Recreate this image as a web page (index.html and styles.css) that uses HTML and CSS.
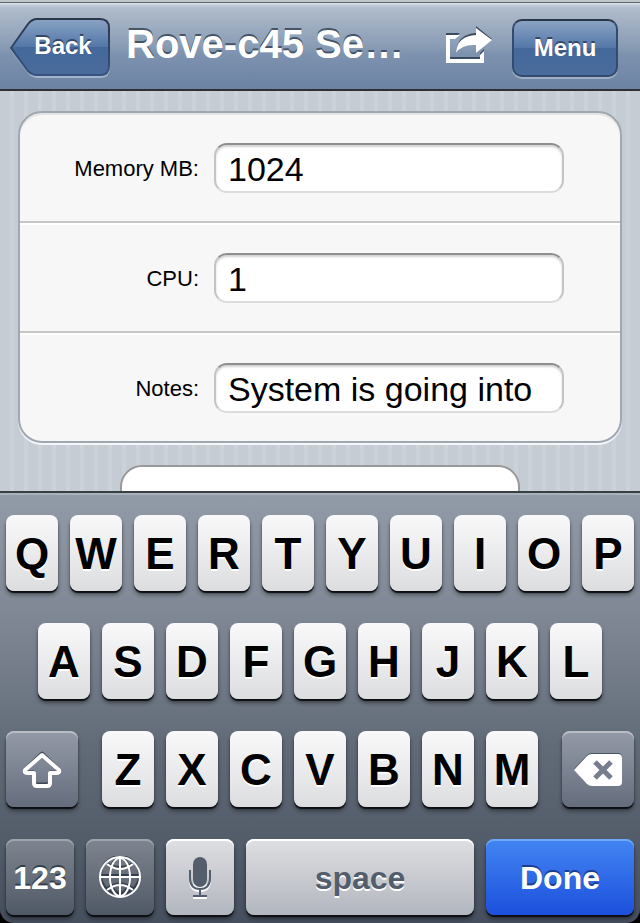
FILE: index.html
```
<!DOCTYPE html>
<html lang="en">
<head>
    <meta charset="UTF-8">
    <meta name="viewport" content="width=device-width, initial-scale=1.0">
    <title>Rove-c45 Settings</title>
    <link rel="stylesheet" href="styles.css">
</head>
<body>
    <header class="toolbar">
        <button class="back-btn" type="button">
            <svg class="back-shape" viewBox="0 0 100 60" aria-hidden="true">
                <defs>
                    <linearGradient id="backFill" x1="0" y1="0" x2="0" y2="1">
                        <stop offset="0" stop-color="#8aa3c4"/>
                        <stop offset="0.5" stop-color="#5377a8"/>
                        <stop offset="0.5" stop-color="#436899"/>
                        <stop offset="1" stop-color="#4a6c9d"/>
                    </linearGradient>
                    <linearGradient id="backEdge" x1="0" y1="0" x2="0" y2="1">
                        <stop offset="0" stop-color="#2b3749"/>
                        <stop offset="1" stop-color="#375381"/>
                    </linearGradient>
                </defs>
                <path d="M1 31 L18 7 Q22 3 27 3 H90 Q99 3 99 12 V50 Q99 59 90 59 H27 Q22 59 18 54 Z" fill="none" stroke="#a3b3c9" stroke-width="2"/>
                <path d="M1 30 L18 6 Q22 1 27 1 H90 Q99 1 99 10 V48 Q99 57 90 57 H27 Q22 57 18 53 Z" fill="url(#backFill)" stroke="url(#backEdge)" stroke-width="2"/>
            </svg>
            <span class="back-label">Back</span>
        </button>
        <h1 class="title">Rove-c45 Se…</h1>
        <button class="share-btn" type="button" aria-label="Share">
            <svg viewBox="0 0 48 40" aria-hidden="true">
                <g fill="#3c4a60">
                    <path d="M1 7 H15 L10 11 H5 V31 H35 V27 L39 23 V35 H1 Z"/>
                    <path d="M31 0 L47 13 L31 27 V19 Q17 17 11 27 Q12 8 31 7 Z"/>
                </g>
                <g fill="#fff">
                    <path d="M1 9 H15 L10 13 H5 V33 H35 V29 L39 25 V37 H1 Z"/>
                    <path d="M31 2 L47 14 L31 27 V19 Q17 18 11 27 Q12 10 31 9 Z"/>
                </g>
            </svg>
        </button>
        <button class="menu-btn" type="button">Menu</button>
    </header>

    <main class="content">
        <form class="card">
            <div class="field">
                <label for="memory">Memory MB:</label>
                <input type="text" id="memory" value="1024">
            </div>
            <div class="field">
                <label for="cpu">CPU:</label>
                <input type="text" id="cpu" value="1">
            </div>
            <div class="field">
                <label for="notes">Notes:</label>
                <input type="text" id="notes" value="System is going into">
            </div>
        </form>
        <div class="panel"></div>
    </main>

    <footer class="keyboard-wrap">
        <div class="keyboard">
            <div class="row">
                <button class="key" type="button">Q</button>
                <button class="key" type="button">W</button>
                <button class="key" type="button">E</button>
                <button class="key" type="button">R</button>
                <button class="key" type="button">T</button>
                <button class="key" type="button">Y</button>
                <button class="key" type="button">U</button>
                <button class="key" type="button">I</button>
                <button class="key" type="button">O</button>
                <button class="key" type="button">P</button>
            </div>
            <div class="row row-inset">
                <button class="key" type="button">A</button>
                <button class="key" type="button">S</button>
                <button class="key" type="button">D</button>
                <button class="key" type="button">F</button>
                <button class="key" type="button">G</button>
                <button class="key" type="button">H</button>
                <button class="key" type="button">J</button>
                <button class="key" type="button">K</button>
                <button class="key" type="button">L</button>
            </div>
            <div class="row">
                <button class="key key-mid key-shift" type="button" aria-label="Shift">
                    <svg class="icon-shift" viewBox="0 0 42 38" aria-hidden="true">
                        <path d="M21 2 L38 18 Q39 21 35 21 H29 V30 Q29 33 26 33 H16 Q13 33 13 30 V21 H7 Q3 21 4 18 Z" fill="none" stroke="#3d4654" stroke-width="3" stroke-linejoin="round"/>
                        <path d="M21 4 L38 19 Q39 22 35 22 H29 V32 Q29 35 26 35 H16 Q13 35 13 32 V22 H7 Q3 22 4 19 Z" fill="none" stroke="#fff" stroke-width="4" stroke-linejoin="round"/>
                    </svg>
                </button>
                <button class="key" type="button">Z</button>
                <button class="key" type="button">X</button>
                <button class="key" type="button">C</button>
                <button class="key" type="button">V</button>
                <button class="key" type="button">B</button>
                <button class="key" type="button">N</button>
                <button class="key" type="button">M</button>
                <button class="key key-mid key-delete" type="button" aria-label="Delete">
                    <svg class="icon-delete" viewBox="0 0 50 36" aria-hidden="true">
                        <path d="M1 17 L14 3 Q16 1 19 1 H45 Q49 1 49 5 V29 Q49 33 45 33 H19 Q16 33 14 31 Z" fill="#4a5363"/>
                        <path d="M1 18 L14 4 Q16 2 19 2 H45 Q49 2 49 6 V30 Q49 34 45 34 H19 Q16 34 14 32 Z" fill="#fff"/>
                        <path d="M22 10 L38 26 M38 10 L22 26" stroke="#767e8d" stroke-width="5"/>
                    </svg>
                </button>
            </div>
            <div class="row">
                <button class="key key-dark key-num" type="button">123</button>
                <button class="key key-dark key-num" type="button" aria-label="Next keyboard">
                    <svg class="icon-globe" viewBox="0 0 44 44" aria-hidden="true">
                        <g fill="none" stroke="#353e4b" stroke-width="2">
                            <circle cx="22" cy="19" r="19"/>
                            <path d="M3 19 H41 M9 7 Q22 15 35 7 M9 32 Q22 23 35 32"/>
                            <ellipse cx="22" cy="19" rx="10" ry="18"/>
                        </g>
                        <g fill="none" stroke="#fff" stroke-width="2">
                            <circle cx="22" cy="21" r="20"/>
                            <path d="M2 21 H42 M22 2 V41 M9 8 Q22 18 35 8 M9 34 Q22 24 35 34"/>
                            <ellipse cx="22" cy="21" rx="10" ry="19"/>
                        </g>
                    </svg>
                </button>
                <button class="key key-light key-num" type="button" aria-label="Dictation">
                    <svg class="icon-mic" viewBox="0 0 24 46" aria-hidden="true">
                        <g fill="none" stroke="#fff" stroke-width="2">
                            <path d="M2 17 V25 Q2 36 12 36 Q22 36 22 25 V17 M12 36 V43 M5 43 H19"/>
                        </g>
                        <rect x="5" y="4" width="14" height="30" rx="7" fill="#fff"/>
                        <rect x="5" y="2" width="14" height="30" rx="7" fill="#535d6b"/>
                        <path d="M2 15 V23 Q2 34 12 34 Q22 34 22 23 V15 M12 34 V41 M5 41 H19" fill="none" stroke="#535d6b" stroke-width="2"/>
                    </svg>
                </button>
                <button class="key key-light key-space" type="button">space</button>
                <button class="key key-blue key-done" type="button">Done</button>
            </div>
        </div>
    </footer>
</body>
</html>
```

FILE: styles.css
```
* {
    box-sizing: border-box;
}
body {
    margin: 0;
    height: 100vh;
    display: flex;
    flex-direction: column;
    overflow: hidden;
    font-family: "Liberation Sans", Arial, Helvetica, sans-serif;
    color: #000;
    background: #000;
}
button {
    margin: 0;
    padding: 0;
    border: none;
    background: none;
    font-family: inherit;
    cursor: pointer;
}
svg {
    display: block;
}

/* toolbar */
.toolbar {
    flex: none;
    display: flex;
    align-items: center;
    height: 91px;
    padding: 4px 22px 0 10px;
    border-top: 2px solid #c2c7c8;
    border-bottom: 2px solid #2d3034;
    background: linear-gradient(#5c656e 0, #5c656e 1px, #e3e9ee 1px, #c3ced9 3px, #b0bccb 6px, #8a9db5 50%, #7d92af 60%, #6d83a3);
}
.back-btn {
    position: relative;
    width: 100px;
    height: 60px;
    padding-bottom: 4px;
}
.back-shape {
    position: absolute;
    top: 0;
    left: 0;
    width: 100%;
    height: 60px;
}
.back-label {
    position: relative;
    padding-left: 6px;
    font-size: 24px;
    font-weight: bold;
    line-height: 28px;
    color: #fff;
    text-shadow: 0 -2px 0 #34496a;
}
.title {
    flex: 1;
    min-width: 0;
    margin: 0;
    padding: 0 0 8px 16px;
    overflow: hidden;
    white-space: nowrap;
    font-size: 40px;
    line-height: 52px;
    color: #fff;
    text-shadow: 0 -2px 0 #465468;
}
.share-btn {
    height: 44px;
    width: 48px;
    padding-bottom: 4px;
    margin-right: 19px;
}
.menu-btn {
    width: 106px;
    height: 58px;
    border: 2px solid #344b70;
    border-top-color: #2b3749;
    border-radius: 10px;
    background: linear-gradient(#8aa3c4, #5377a8 50%, #436899 50%, #4a6c9d);
    box-shadow: 0 2px 0 #a0afc5;
    font-size: 24px;
    font-weight: bold;
    color: #fff;
    text-shadow: 0 -2px 0 #34496a;
}

/* form */
.content {
    flex: 1;
    min-height: 0;
    overflow: hidden;
    padding: 20px 18px 0;
    background: repeating-linear-gradient(90deg, #c5ccd4 0, #c5ccd4 10px, #cbd2d8 10px, #cbd2d8 14px);
}
.card {
    border: 2px solid #9fa7b1;
    border-radius: 24px;
    background: #f7f7f7;
    box-shadow: 0 2px 0 #f4f6f8, inset 0 2px 0 #e4e4e4;
}
.field {
    display: flex;
    align-items: center;
    gap: 15px;
    padding: 30px 56px 28px 20px;
}
.field + .field {
    border-top: 2px solid #c6c6c6;
    box-shadow: inset 0 2px 0 #fff;
}
.field label {
    width: 159px;
    padding-top: 2px;
    text-align: right;
    font-size: 22px;
    line-height: 28px;
}
.field input {
    flex: 1;
    min-width: 0;
    height: 50px;
    padding: 2px 12px 0;
    border: 2px solid #c4c4c4;
    border-top-color: #8e8e8e;
    border-bottom-color: #dcdcdc;
    border-radius: 13px;
    background: #fff;
    box-shadow: inset 0 2px 2px #d2d2d2;
    font-family: inherit;
    font-size: 34px;
    color: #000;
    outline: none;
}
.panel {
    width: 400px;
    max-width: 100%;
    height: 90px;
    margin: 22px auto 0;
    border: 2px solid #999;
    border-radius: 22px;
    background: #fff;
}

/* keyboard */
.keyboard-wrap {
    flex: none;
    background: #000;
}
.keyboard {
    display: flex;
    flex-direction: column;
    gap: 32px;
    padding: 22px 6px 8px;
    border-top: 2px solid #3a3f44;
    border-radius: 0 0 14px 14px;
    background: linear-gradient(#929ba8, #7c8491 33%, #626c78 58%, #464f5e);
    box-shadow: inset 0 2px 0 #a9b2bc;
}
.row {
    display: flex;
    gap: 12px;
}
.row-inset {
    padding: 0 32px;
}
.key {
    flex: 52 1 0;
    display: flex;
    align-items: center;
    justify-content: center;
    height: 76px;
    padding-top: 2px;
    border-radius: 8px;
    background: linear-gradient(#f9f9fa, #dcdddf);
    box-shadow: 0 2px 1px #0c0e12, 0 4px 4px rgba(0, 0, 0, 0.4);
    font-size: 44px;
    font-weight: bold;
    color: #000;
    text-shadow: 0 2px 0 #fff;
}
.key-mid {
    flex-grow: 72;
    background: linear-gradient(#949aa7, #656d7d);
    box-shadow: inset 0 2px 0 #b9bec6, 0 2px 1px #0c0e12, 0 4px 4px rgba(0, 0, 0, 0.4);
}
.key-shift {
    margin-right: 12px;
}
.key-delete {
    margin-left: 12px;
}
.key-dark,
.key-light,
.key-blue {
    font-size: 32px;
}
.key-dark {
    background: linear-gradient(#7f8590, #4f5965);
    box-shadow: inset 0 2px 0 #9fa5ad, 0 2px 1px #0c0e12, 0 4px 4px rgba(0, 0, 0, 0.4);
    color: #fff;
    text-shadow: 0 -2px 0 #353e4b;
}
.key-light {
    background: linear-gradient(#dedfe2, #b2b6be);
    box-shadow: inset 0 2px 0 #fff, 0 2px 1px #0c0e12, 0 4px 4px rgba(0, 0, 0, 0.4);
    color: #535d6b;
}
.key-blue {
    background: linear-gradient(#4285f3, #1c50dc);
    box-shadow: inset 0 2px 0 #6ea8f7, 0 2px 1px #0c0e12, 0 4px 4px rgba(0, 0, 0, 0.4);
    color: #fff;
    text-shadow: 0 -2px 0 #1c3e8c;
}
.key-num {
    flex-grow: 68;
}
.key-space {
    flex-grow: 228;
}
.key-done {
    flex-grow: 148;
}
.icon-shift {
    width: 42px;
    height: 38px;
}
.icon-delete {
    width: 50px;
    height: 36px;
}
.icon-globe {
    width: 44px;
    height: 44px;
}
.icon-mic {
    width: 24px;
    height: 46px;
}
```
